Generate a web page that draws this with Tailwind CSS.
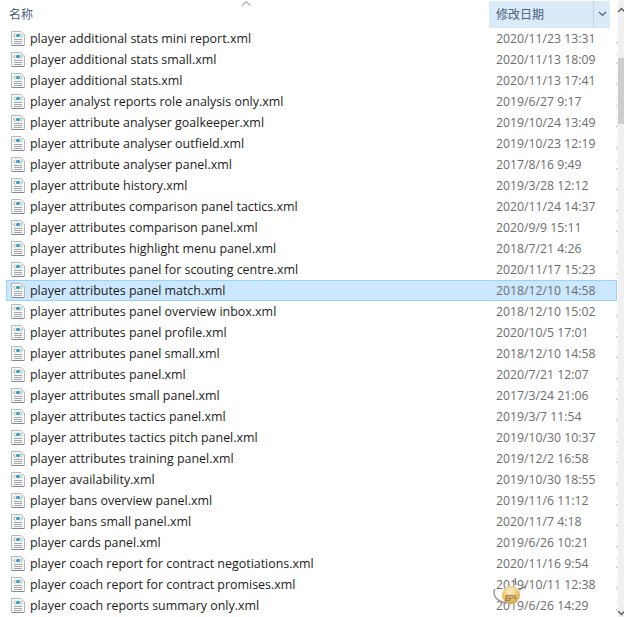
<!DOCTYPE html>
<html lang="en">
<head>
    <meta charset="UTF-8">
    <title>Explorer list</title>
    <script src="https://cdn.jsdelivr.net/npm/@tailwindcss/browser@4"></script>
</head>
<body class="relative bg-white h-[617px] w-[624px] overflow-hidden font-['Open_Sans','Noto_Sans_CJK_SC',sans-serif] text-[12px]">
    <div class="flex h-[617px]">
        <div class="w-[618px] shrink-0 overflow-hidden">
            <!-- header -->
            <div class="flex h-[28px] relative">
                <div class="w-[489px] pl-[9px] pt-[6px] text-[#4c607a] text-[12px] leading-[18px]">名称</div>
                <svg class="absolute left-[241px] top-0" width="10" height="6" viewBox="0 0 10 6" fill="none" stroke="#777" stroke-width="1"><path d="M1 5.5 5 1.5 9 5.5"/></svg>
                <div class="w-[105px] mt-[1px] bg-[#d9ebf9] pl-[7px] pt-[5px] leading-[18px] text-[#4c607a] border-r border-[#c0d3e2]">修改日期</div>
                <div class="w-[16px] mt-[1px] bg-[#d9ebf9] flex justify-center pt-[10px]">
                    <svg width="9" height="6" viewBox="0 0 9 6" fill="none" stroke="#4c607a" stroke-width="1.2"><path d="M1 1 4.5 4.5 8 1"/></svg>
                </div>
            </div>
            <div id="rows"></div>
        </div>
        <!-- scrollbar -->
        <div class="relative w-[6px] bg-[#f0f0f0] flex flex-col overflow-hidden">
            <svg class="absolute left-0 top-[7px]" width="6" height="6" viewBox="0 0 6 6" fill="none" stroke="#606060" stroke-width="1.5"><path d="M0 5 3.5 1.5 7 5"/></svg>
            <div class="h-[58px] shrink-0"></div>
            <div class="h-[66px] bg-[#cdcdcd]"></div>
            <svg class="absolute left-0 top-[610px]" width="6" height="6" viewBox="0 0 6 6" fill="none" stroke="#606060" stroke-width="1.5"><path d="M0 1 3.5 4.5 7 1"/></svg>
        </div>
    </div>

    <!-- gps ball floating over the last dates -->
    <div class="absolute left-[492px] top-[576px] w-[38px] h-[32px]">
        <svg class="absolute left-0 top-0" width="38" height="32" viewBox="0 0 38 32" fill="none">
            <defs>
                <radialGradient id="ball" cx="0.45" cy="0.3" r="0.75">
                    <stop offset="0" stop-color="#fdf0c4"/>
                    <stop offset="0.55" stop-color="#f0c672"/>
                    <stop offset="1" stop-color="#c99a48"/>
                </radialGradient>
            </defs>
            <path d="M3 13C0 18 4 26 15 27" stroke="#9a9a9a" stroke-width="1.5"/>
            <path d="M27 14 34 10M24 9 23 2" stroke="#777" stroke-width="1.2"/>
            <circle cx="19" cy="19" r="9" fill="url(#ball)"/>
        </svg>
        <span class="absolute left-[13px] top-[17px] text-[7px] leading-[8px] text-[#6b5a3a]">gps</span>
    </div>

    <template id="row">
        <div class="row flex items-center h-[21px] ml-[6px] w-[611px] border border-transparent">
            <svg class="ml-[4px] mr-[5px] shrink-0" width="14" height="15" viewBox="0 0 14 15">
                <path d="M.5 .5H10L13.5 4V14.5H.5Z" fill="#fcfcfc" stroke="#b4b9bf"/>
                <path d="M1 14.5H13" stroke="#83888f"/>
                <path d="M2.5 4.5 4.5 2.5M2.5 4.5 4.5 6.5M11.5 4.5 9.5 2.5M11.5 4.5 9.5 6.5" stroke="#8fc08f"/>
                <ellipse cx="7" cy="4.5" rx="2.2" ry="1.8" fill="#3f9dc9"/>
                <path d="M3 8.5H11M3 10.5H11M3 12.5H11" stroke="#a3a8af"/>
            </svg>
            <span class="name w-[466px] mt-[2px] text-[#1c1c1c] text-[12.45px] whitespace-nowrap"></span>
            <span class="date mt-[2px] text-[#6d6d6d] text-[12.25px] whitespace-nowrap"></span>
            <!-- edge of the next column, clipped -->
            <div class="ml-auto -mr-[1px] self-stretch flex flex-col pt-[5px] gap-[7px]">
                <div class="w-[1px] h-[1px] bg-[#fbd5a0]"></div>
                <div class="w-[1px] h-[1px] bg-[#dda25a]"></div>
            </div>
        </div>
    </template>
    <script>
        const files = [
            ['player additional stats mini report.xml', '2020/11/23 13:31'],
            ['player additional stats small.xml', '2020/11/13 18:09'],
            ['player additional stats.xml', '2020/11/13 17:41'],
            ['player analyst reports role analysis only.xml', '2019/6/27 9:17'],
            ['player attribute analyser goalkeeper.xml', '2019/10/24 13:49'],
            ['player attribute analyser outfield.xml', '2019/10/23 12:19'],
            ['player attribute analyser panel.xml', '2017/8/16 9:49'],
            ['player attribute history.xml', '2019/3/28 12:12'],
            ['player attributes comparison panel tactics.xml', '2020/11/24 14:37'],
            ['player attributes comparison panel.xml', '2020/9/9 15:11'],
            ['player attributes highlight menu panel.xml', '2018/7/21 4:26'],
            ['player attributes panel for scouting centre.xml', '2020/11/17 15:23'],
            ['player attributes panel match.xml', '2018/12/10 14:58'],
            ['player attributes panel overview inbox.xml', '2018/12/10 15:02'],
            ['player attributes panel profile.xml', '2020/10/5 17:01'],
            ['player attributes panel small.xml', '2018/12/10 14:58'],
            ['player attributes panel.xml', '2020/7/21 12:07'],
            ['player attributes small panel.xml', '2017/3/24 21:06'],
            ['player attributes tactics panel.xml', '2019/3/7 11:54'],
            ['player attributes tactics pitch panel.xml', '2019/10/30 10:37'],
            ['player attributes training panel.xml', '2019/12/2 16:58'],
            ['player availability.xml', '2019/10/30 18:55'],
            ['player bans overview panel.xml', '2019/11/6 11:12'],
            ['player bans small panel.xml', '2020/11/7 4:18'],
            ['player cards panel.xml', '2019/6/26 10:21'],
            ['player coach report for contract negotiations.xml', '2020/11/16 9:54'],
            ['player coach report for contract promises.xml', '2019/10/11 12:38'],
            ['player coach reports summary only.xml', '2019/6/26 14:29'],
        ];
        const rows = document.getElementById('rows');
        const tpl = document.getElementById('row');
        files.forEach(([name, date], i) => {
            const el = tpl.content.cloneNode(true);
            el.querySelector('.name').textContent = name;
            el.querySelector('.date').textContent = date;
            if (i === 12) {
                el.querySelector('.row').className = 'row flex items-center h-[21px] ml-[6px] w-[611px] border border-[#99d1ff] bg-[#cce8ff]';
            }
            rows.appendChild(el);
        });
    </script>
</body>
</html>
